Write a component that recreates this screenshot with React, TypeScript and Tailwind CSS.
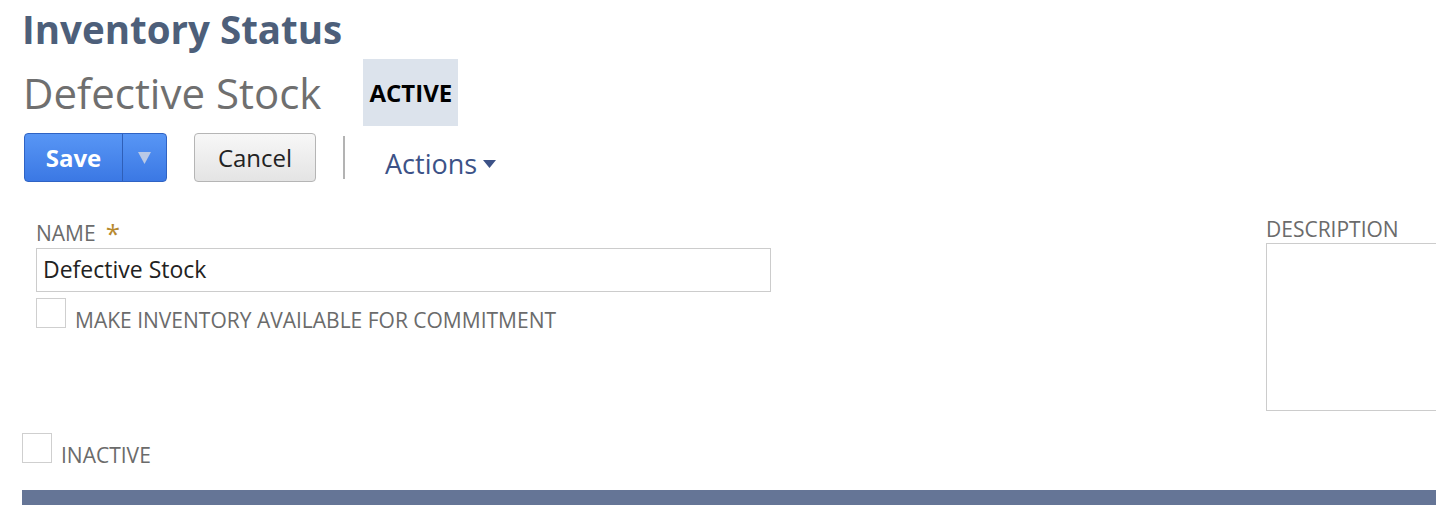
function Checkbox() {
  return <span className="block h-[30px] w-[30px] shrink-0 border border-[#cfcfcf] bg-white" />;
}

export default function App() {
  return (
    <div className="h-[505px] w-[1436px] overflow-hidden bg-white pl-[22px] font-['Open_Sans',sans-serif]">
      <h1 className="pt-[3px] text-[38.5px] leading-[52px] font-bold text-[#4d5f7a]">Inventory Status</h1>

      <div className="mt-[4px] flex items-center">
        <span className="ml-px text-[42px] leading-[67px] text-[#6f6f6f]">Defective Stock</span>
        <span className="ml-[42px] flex h-[67px] w-[95px] items-center justify-center bg-[#dce3ec] text-[24px] font-bold text-black">
          ACTIVE
        </span>
      </div>

      <div className="mt-[5px] flex items-center">
        <div className="ml-[2px] flex h-[49px] w-[143px] overflow-hidden rounded-[4px] border border-[#2f63c4] bg-gradient-to-b from-[#5896f5] to-[#3b78e4]">
          <span className="flex w-[97px] items-center justify-center text-[24px] font-bold text-white">Save</span>
          <span className="flex flex-1 items-center justify-center border-l border-[#2f5fb8]">
            <svg width="13" height="12" viewBox="0 0 13 12">
              <path d="M0 0H13L6.5 12Z" fill="#b9c9e6" />
            </svg>
          </span>
        </div>
        <button className="ml-[27px] flex h-[49px] w-[122px] items-center justify-center rounded-[4px] border border-[#b5b5b5] bg-gradient-to-b from-[#f7f7f7] to-[#e4e4e4] text-[24px] text-[#222]">
          Cancel
        </button>
        <span className="ml-[27px] h-[43px] w-[2px] bg-[#b3b3b3]" />
        <span className="ml-[40px] mt-[13px] flex items-center text-[27px] text-[#3c5287]">
          Actions
          <svg className="ml-[6px]" width="13" height="8" viewBox="0 0 13 8">
            <path d="M0 0H13L6.5 8Z" fill="#3c5287" />
          </svg>
        </span>
      </div>

      <div className="mt-[35px] flex">
        <div className="ml-[14px] w-[735px]">
          <div className="flex items-center text-[21px] leading-[26px] text-[#6b6b6b]">
            NAME
            <span className="ml-[10px] text-[26px] leading-[26px] text-[#b7892f]">*</span>
          </div>
          <div className="mt-[2px] flex h-[44px] items-center border border-[#cccccc] px-[6px] text-[23px] text-[#222]">
            Defective Stock
          </div>
          <div className="mt-[6px] flex items-end gap-[9px]">
            <Checkbox />
            <span className="text-[21px] leading-[16px] text-[#6b6b6b]">MAKE INVENTORY AVAILABLE FOR COMMITMENT</span>
          </div>
        </div>
        <div className="ml-auto w-[170px]">
          <div className="-mt-[4px] text-[21px] leading-[26px] text-[#6b6b6b]">DESCRIPTION</div>
          <div className="mt-[1px] h-[168px] border border-r-0 border-[#cccccc]" />
        </div>
      </div>

      <div className="mt-[22px] flex items-end gap-[9px]">
        <Checkbox />
        <span className="text-[21px] leading-[16px] text-[#6b6b6b]">INACTIVE</span>
      </div>

      <div className="mt-[27px] h-[20px] bg-[#657596]" />
    </div>
  );
}
